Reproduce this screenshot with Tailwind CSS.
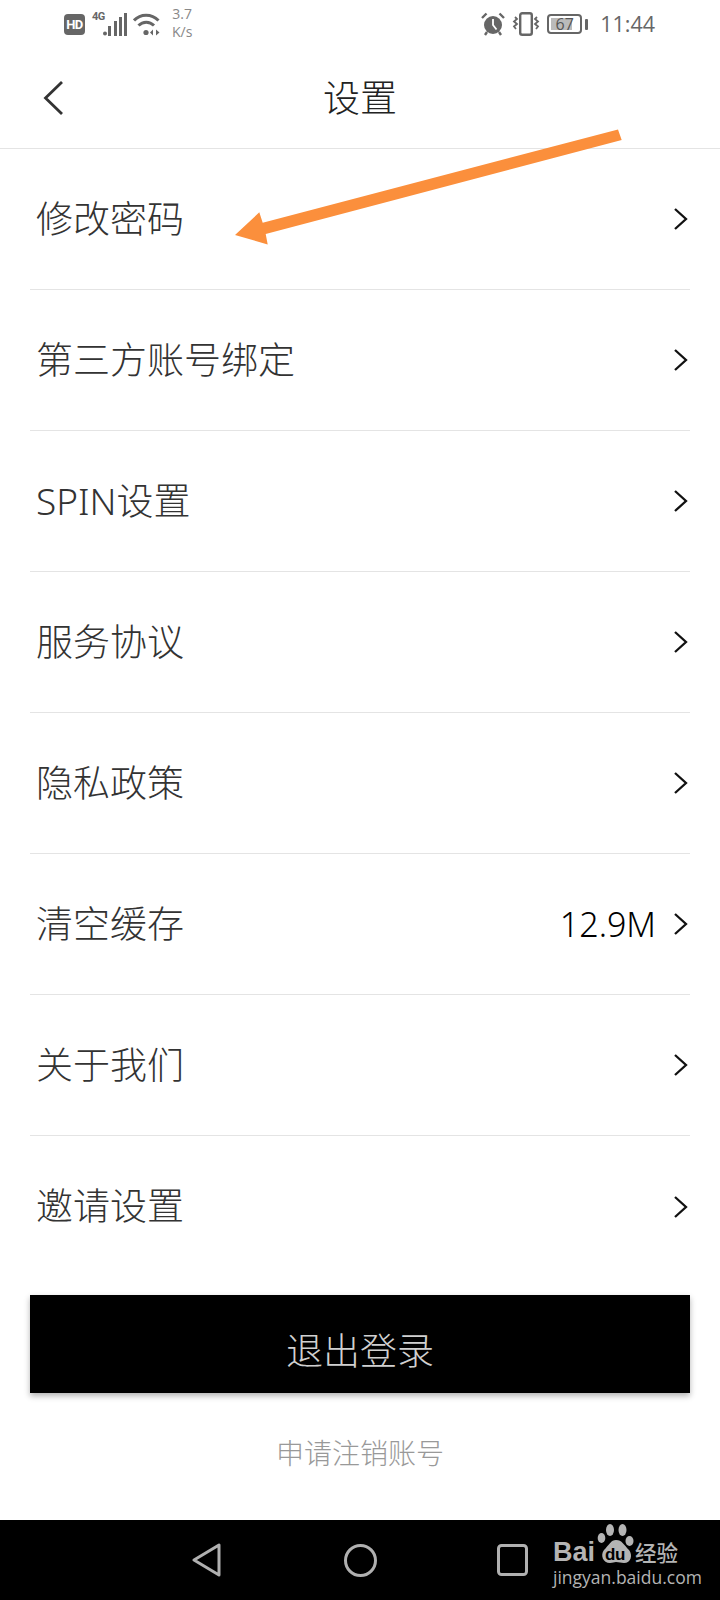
<!doctype html>
<html lang="zh">
<head>
<meta charset="utf-8">
<script src="https://cdn.jsdelivr.net/npm/@tailwindcss/browser@4"></script>
</head>
<body class="m-0 bg-white">
<div class="relative w-[720px] h-[1600px] overflow-hidden bg-white flex flex-col font-['Noto_Sans','Noto_Sans_CJK_SC',sans-serif] font-light text-[#333]">

  <!-- status bar -->
  <div class="h-[48px] flex items-center justify-between pl-[64px] pr-[65px] text-[#666] shrink-0">
    <div class="flex items-center">
      <div class="w-[21px] h-[21px] rounded-[4px] bg-[#666] text-white text-[13px] leading-[21px] font-bold text-center font-['Roboto',sans-serif] tracking-[-0.5px]">HD</div>
      <div class="relative w-[41px] h-[24px] ml-[7px]">
        <span class="absolute left-0 top-[-2px] text-[11px] leading-[13px] font-bold font-['Roboto',sans-serif] tracking-[-0.5px]">4G</span>
        <svg class="absolute left-[11px] top-[1px]" width="24" height="23" viewBox="0 0 24 23" fill="#666"><circle cx="2" cy="20.500" r="2"/><rect x="5" y="13" width="3" height="10"/><rect x="11" y="8" width="3" height="15"/><rect x="16" y="4" width="3" height="19"/><rect x="21" y="0" width="3" height="23"/></svg>
      </div>
      <svg width="27" height="23" viewBox="0 0 27 23" fill="none" stroke="#666" stroke-width="3"><path d="M1 7.500C7.500 0.500 18.500 0.500 25.500 7.500"/><path d="M5.500 12.500C10 8 16.500 8 21 12.500"/><circle cx="13" cy="19.500" r="2.600" fill="#666" stroke="none"/><path d="M20 16.500l-3 3 3 3zM23 16.500l3.500 3-3.500 3z" fill="#666" stroke="none"/></svg>
      <div class="ml-[12px] text-[14px] leading-[18px] font-['Open_Sans',sans-serif] font-normal text-[#888] text-center mt-[-2px]">3.7<br>K/s</div>
    </div>
    <div class="flex items-center">
      <svg width="24" height="24" viewBox="0 0 24 24"><circle cx="12" cy="13" r="9" fill="#666"/><path d="M12 7V13l3.500 4.500" stroke="#fff" stroke-width="1.800" fill="none"/><path d="M1 6 5.500 1.500M23 6 18.500 1.500M6 20l-2 3M18 20l2 3" stroke="#666" stroke-width="2.400"/></svg>
      <svg class="ml-[7px]" width="28" height="24" viewBox="0 0 28 24" fill="none" stroke="#666"><rect x="8.200" y="1.200" width="11.600" height="21.600" rx="2" stroke-width="2.400"/><path d="M3 5l2 2-3 2.500 3 2.500-3 2.500 2 2.500M25 5l-2 2 3 2.500-3 2.500 3 2.500-2 2.500" stroke-width="1.800"/></svg>
      <div class="ml-[7px] flex items-center">
        <div class="w-[35px] h-[20px] rounded-[4px] border-2 border-[#666] p-[2px] relative">
          <div class="h-full w-[21px] bg-[#bbb]"></div>
          <span class="absolute inset-0 flex items-center justify-center text-[16px] leading-none text-[#555] font-normal font-['Open_Sans',sans-serif]">67</span>
        </div>
        <div class="w-[3px] h-[11px] ml-[3px] rounded-[1px] bg-[#666]"></div>
      </div>
      <div class="ml-[12px] text-[21.500px] leading-none font-normal font-['Open_Sans',sans-serif] text-[#666]">11:44</div>
    </div>
  </div>

  <!-- header -->
  <div class="relative h-[101px] shrink-0 flex items-center justify-center border-b border-[#e4e4e4] text-[37px] leading-none text-[#222] pb-[2px]">
    <svg class="absolute left-[42px] top-[32px]" width="22" height="36" viewBox="0 0 22 36" fill="none" stroke="#333" stroke-width="2.800"><path d="M20 2 3.500 18 20 34"/></svg>
    <span>设置</span>
  </div>

  <!-- rows -->
  <div class="flex flex-col px-[30px] shrink-0">
    <div class="h-[141px] flex items-center border-b border-[#e4e4e4] pl-[6px] pr-[2px]"><span class="flex-1 text-[37px] leading-none pb-[2px]">修改密码</span><svg width="15" height="24" viewBox="0 0 15 24" fill="none" stroke="#111" stroke-width="2.300"><path d="M2 2 13 12 2 22"/></svg></div>
    <div class="h-[141px] flex items-center border-b border-[#e4e4e4] pl-[6px] pr-[2px]"><span class="flex-1 text-[37px] leading-none pb-[2px]">第三方账号绑定</span><svg width="15" height="24" viewBox="0 0 15 24" fill="none" stroke="#111" stroke-width="2.300"><path d="M2 2 13 12 2 22"/></svg></div>
    <div class="h-[141px] flex items-center border-b border-[#e4e4e4] pl-[6px] pr-[2px]"><span class="flex-1 text-[37px] leading-none pb-[2px]">SPIN设置</span><svg width="15" height="24" viewBox="0 0 15 24" fill="none" stroke="#111" stroke-width="2.300"><path d="M2 2 13 12 2 22"/></svg></div>
    <div class="h-[141px] flex items-center border-b border-[#e4e4e4] pl-[6px] pr-[2px]"><span class="flex-1 text-[37px] leading-none pb-[2px]">服务协议</span><svg width="15" height="24" viewBox="0 0 15 24" fill="none" stroke="#111" stroke-width="2.300"><path d="M2 2 13 12 2 22"/></svg></div>
    <div class="h-[141px] flex items-center border-b border-[#e4e4e4] pl-[6px] pr-[2px]"><span class="flex-1 text-[37px] leading-none pb-[2px]">隐私政策</span><svg width="15" height="24" viewBox="0 0 15 24" fill="none" stroke="#111" stroke-width="2.300"><path d="M2 2 13 12 2 22"/></svg></div>
    <div class="h-[141px] flex items-center border-b border-[#e4e4e4] pl-[6px] pr-[2px]"><span class="flex-1 text-[37px] leading-none pb-[2px]">清空缓存</span><span class="text-[34px] leading-none text-black mr-[17px]">12.9M</span><svg width="15" height="24" viewBox="0 0 15 24" fill="none" stroke="#111" stroke-width="2.300"><path d="M2 2 13 12 2 22"/></svg></div>
    <div class="h-[141px] flex items-center border-b border-[#e4e4e4] pl-[6px] pr-[2px]"><span class="flex-1 text-[37px] leading-none pb-[2px]">关于我们</span><svg width="15" height="24" viewBox="0 0 15 24" fill="none" stroke="#111" stroke-width="2.300"><path d="M2 2 13 12 2 22"/></svg></div>
    <div class="h-[141px] flex items-center pl-[6px] pr-[2px]"><span class="flex-1 text-[37px] leading-none pb-[2px]">邀请设置</span><svg width="15" height="24" viewBox="0 0 15 24" fill="none" stroke="#111" stroke-width="2.300"><path d="M2 2 13 12 2 22"/></svg></div>
  </div>

  <!-- logout -->
  <div class="mx-[30px] mt-[18px] h-[98px] shrink-0 bg-black flex items-center justify-center pt-[13px] text-[37px] leading-none text-[#d0d0d0] shadow-[0_3px_6px_rgba(0,0,0,0.3)]">退出登录</div>
  <div class="mt-[45px] text-center text-[28px] leading-[30px] text-[#999] shrink-0">申请注销账号</div>

  <!-- nav bar -->
  <div class="mt-auto h-[80px] bg-black shrink-0 flex items-center pl-[192px]">
    <svg width="29" height="34" viewBox="0 0 29 34" fill="none" stroke="#b0b0b0" stroke-width="3" stroke-linejoin="round"><path d="M27 2V32L2 17Z"/></svg>
    <svg class="ml-[123px]" width="33" height="33" viewBox="0 0 33 33" fill="none" stroke="#b0b0b0" stroke-width="3"><circle cx="16.500" cy="16.500" r="15"/></svg>
    <svg class="ml-[120px]" width="31" height="32" viewBox="0 0 31 32" fill="none" stroke="#b0b0b0" stroke-width="3"><rect x="1.500" y="1.500" width="28" height="29" rx="3"/></svg>
  </div>

  <!-- orange arrow overlay -->
  <svg class="absolute left-0 top-0 pointer-events-none" width="720" height="300" viewBox="0 0 720 300" fill="#fb8f3c"><path d="M618 129.500 621.700 140 265.700 234 267.700 244.500 235 235 259.300 212.300 262.700 222.700Z"/></svg>

  <!-- baidu watermark overlay -->
  <div class="absolute left-[553px] top-[1523px] w-[130px] h-[64px] text-[#b4b4b4]">
    <span class="absolute left-0 top-[14px] text-[27px] leading-[30px] font-bold font-['Liberation_Sans',sans-serif]">Bai</span>
    <svg class="absolute left-[44px] top-0" width="38" height="41" viewBox="0 0 38 41" fill="#b4b4b4">
      <ellipse cx="4.500" cy="15" rx="3.800" ry="5"/><ellipse cx="13" cy="7" rx="4" ry="6"/><ellipse cx="25.500" cy="7" rx="4" ry="6"/><ellipse cx="32.500" cy="18" rx="4" ry="5"/>
      <path d="M19 17C14 17 12 22 7 27 3 32 6 40 13 40 16 40 17 39 19 39 22 39 24 40 27 40 34 40 36 32 32 27 27 22 25 17 19 17Z"/>
    </svg>
    <span class="absolute left-[52px] top-[23px] text-[17px] leading-[17px] font-bold text-black font-['Liberation_Sans',sans-serif] tracking-[-0.5px]">du</span>
    <span class="absolute left-[82px] top-[17px] text-[21.500px] leading-[24px] font-medium font-['Noto_Sans_CJK_SC',sans-serif] whitespace-nowrap">经验</span>
    <span class="absolute left-0 top-[44px] text-[17.500px] leading-[20px] font-normal font-['Open_Sans',sans-serif] whitespace-nowrap">jingyan.baidu.com</span>
  </div>
</div>
</body>
</html>
